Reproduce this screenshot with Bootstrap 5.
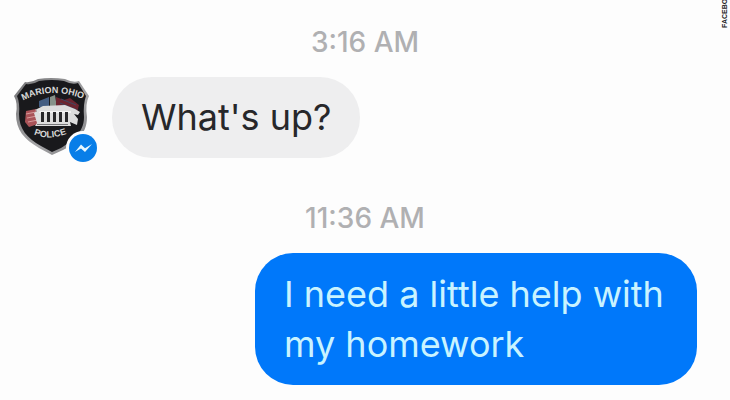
<!DOCTYPE html>
<html lang="en">
<head>
<meta charset="utf-8">
<meta name="viewport" content="width=device-width, initial-scale=1">
<title>Messages</title>
<link href="https://cdn.jsdelivr.net/npm/bootstrap@5.3.0/dist/css/bootstrap.min.css" rel="stylesheet">
<style>
body { background: #fdfdfd; font-family: Inter, "Liberation Sans", sans-serif; color: #27272a; }
.chat { padding: 24px 33px 15px 12px; }
.stamp { font-size: 28px; line-height: 36px; font-weight: 500; color: #b0b0b2; padding-left: 21px; }
.message { font-size: 36px; line-height: 50px; }
.incoming { background: #eeeeef; border-radius: 40px; padding: 15px 29px 16px; }
.outgoing { background: #0078fa; color: #c9f3ff; border-radius: 38px; padding: 16px 29px; max-width: 442px; }
.avatar { width: 88px; height: 88px; flex: none; }
.thread-row { gap: 12px; margin: 17px 0 35px; }
.later { margin-bottom: 17px; }
.credit { top: 0; right: 1px; height: 28px; writing-mode: vertical-rl; transform: rotate(180deg); font: 700 7px/8px "Liberation Sans", sans-serif; color: #222; overflow: hidden; white-space: nowrap; }
</style>
<script src="https://cdn.jsdelivr.net/npm/bootstrap@5.3.0/dist/js/bootstrap.bundle.min.js"></script>
</head>
<body>
<main class="chat position-relative">
  <div class="stamp text-center">3:16 AM</div>
  <div class="thread-row d-flex align-items-start">
    <svg class="avatar" viewBox="12 77 88 88" role="img" aria-label="Marion Ohio Police">
      <defs>
        <path id="top-arc" d="M22 101 Q52 85 88 101"/>
        <path id="bottom-arc" d="M33 134 Q50 142 74 131"/>
        <linearGradient id="rim" x2="1" y2="1"><stop stop-color="#747476"/><stop offset=".6" stop-color="#a6a6a8"/><stop offset="1" stop-color="#77777a"/></linearGradient>
      </defs>
      <path d="M25 82Q31 83 38 79Q51 77 65 79Q73 83 79 81L89 96Q85 104 87 117C87 136 73 145 63 150L52 155L39 148C24 139 16 130 16 114Q18 103 14 96Z" fill="url(#rim)"/>
      <path d="M26 84Q33 85 39 81Q52 79 64 81Q72 85 78 83L86 96Q83 104 84 117C84 133 72 141 61 148L52 152L41 146C27 138 19 129 19 114Q20 103 17 96Z" fill="#19191c"/>
      <path d="M50 97l5-2 2 13h-7z" fill="#879289"/>
      <path d="M39 101l10-4v10H39z" fill="#435d82"/>
      <path d="M56 97l8 3 6-2 9 7-2 8-10-3-11-3z" fill="#6c2530"/>
      <path d="M61 99l15 6M60 103l17 7" stroke="#3d4962" stroke-width="1"/>
      <path d="M26 111l10-2 2 15-9 3-4-5z" fill="#a85257"/>
      <path d="M26 114l10-2M27 118l10-2M28 122l10-2" stroke="#d69b9b"/>
      <path d="M35 110l8-4 22-1 10 4 5 3-2 3-4-1 4 5-1 6-7-3 1 4H35l2-3-3-10 3-2z" fill="#ddd"/>
      <path d="M40 111h31v2H39z" fill="#f2f2f2"/>
      <path d="M41 112h3v10h-3zm6 0h3v10h-3zm6 0h3v10h-3zm6 0h3v10h-3zm6 0h3v10h-3z" fill="#28282a"/>
      <path d="M37 124h31v1H37z" fill="#77777a"/>
      <g fill="#d8d8d8" font-family="Liberation Sans, sans-serif" font-weight="700" font-size="9">
        <text><textPath href="#top-arc" startOffset="1">MARION OHIO</textPath></text>
        <text><textPath href="#bottom-arc" startOffset="1">POLICE</textPath></text>
      </g>
      <circle cx="83" cy="148" r="17" fill="#fdfdfd"/>
      <circle cx="83" cy="148" r="14" fill="#087ee8"/>
      <path d="M75 152L81 144.500L85 148.200L92 144L85 152L81 148.500Z" fill="#e8f8ff"/>
    </svg>
    <div class="message incoming">What's up?</div>
  </div>
  <div class="stamp later text-center">11:36 AM</div>
  <div class="d-flex justify-content-end">
    <div class="message outgoing">I need a little help with my homework</div>
  </div>
  <div class="credit position-absolute">FACEBOOK</div>
</main>
</body>
</html>
